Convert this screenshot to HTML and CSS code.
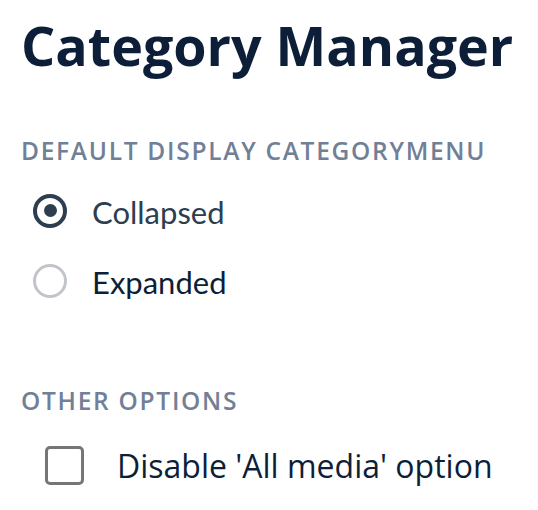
FILE: index.html
```html
<!DOCTYPE html>
<html>
<head>
<meta charset="utf-8">
<link rel="stylesheet" href="styles.css">
</head>
<body>
<div class="page">
  <h1 class="title">Category Manager</h1>
  <section class="group">
    <h2 class="label">DEFAULT DISPLAY CATEGORYMENU</h2>
    <div class="radios">
      <div class="radio-row">
        <span class="radio checked"><span class="dot"></span></span>
        <span class="radio-text checked-text">Collapsed</span>
      </div>
      <div class="radio-row">
        <span class="radio"></span>
        <span class="radio-text">Expanded</span>
      </div>
    </div>
  </section>
  <section class="group other">
    <h2 class="label">OTHER OPTIONS</h2>
    <div class="check-row">
      <span class="checkbox"></span>
      <span class="check-text">Disable 'All media' option</span>
    </div>
  </section>
</div>
</body>
</html>
```
FILE: styles.css
```css
html, body {
  margin: 0;
  padding: 0;
  background: #ffffff;
}
.page {
  padding: 12.5px 0 0 21px;
  display: flex;
  flex-direction: column;
}
.title {
  margin: 0;
  font-family: "Open Sans", sans-serif;
  font-weight: 700;
  font-size: 53.8px;
  line-height: 64px;
  color: #0d1f38;
  white-space: nowrap;
}
.group {
  display: flex;
  flex-direction: column;
}
.label {
  margin: 59px 0 0 0;
  font-family: "Open Sans", sans-serif;
  font-weight: 600;
  font-size: 24.5px;
  line-height: 30px;
  letter-spacing: 1.72px;
  color: #718096;
  white-space: nowrap;
}
.radios {
  display: flex;
  flex-direction: column;
  gap: 36px;
  margin-top: 28px;
  padding-left: 12px;
}
.radio-row {
  display: flex;
  align-items: center;
  gap: 25px;
  height: 34px;
}
.radio {
  box-sizing: border-box;
  flex: none;
  width: 34px;
  height: 34px;
  border-radius: 50%;
  border: 3.5px solid #c1c5ca;
  display: flex;
  align-items: center;
  justify-content: center;
}
.radio.checked {
  border: 4px solid #2d3e50;
}
.dot {
  width: 13px;
  height: 13px;
  border-radius: 50%;
  background: #2d3e50;
}
.radio-text {
  font-family: Lato, sans-serif;
  font-size: 31px;
  line-height: 36px;
  padding-top: 3px;
  color: #0d1f38;
}
.checked-text {
  color: #2d3e50;
}
.other .label {
  margin-top: 88px;
}
.check-row {
  display: flex;
  align-items: center;
  gap: 33px;
  margin-top: 28.5px;
  padding-left: 24px;
}
.checkbox {
  box-sizing: border-box;
  flex: none;
  width: 39px;
  height: 39px;
  border: 3.5px solid #767676;
  border-radius: 5px;
}
.check-text {
  font-family: "Open Sans", sans-serif;
  font-size: 32px;
  color: #0d1f38;
  white-space: nowrap;
}
```
